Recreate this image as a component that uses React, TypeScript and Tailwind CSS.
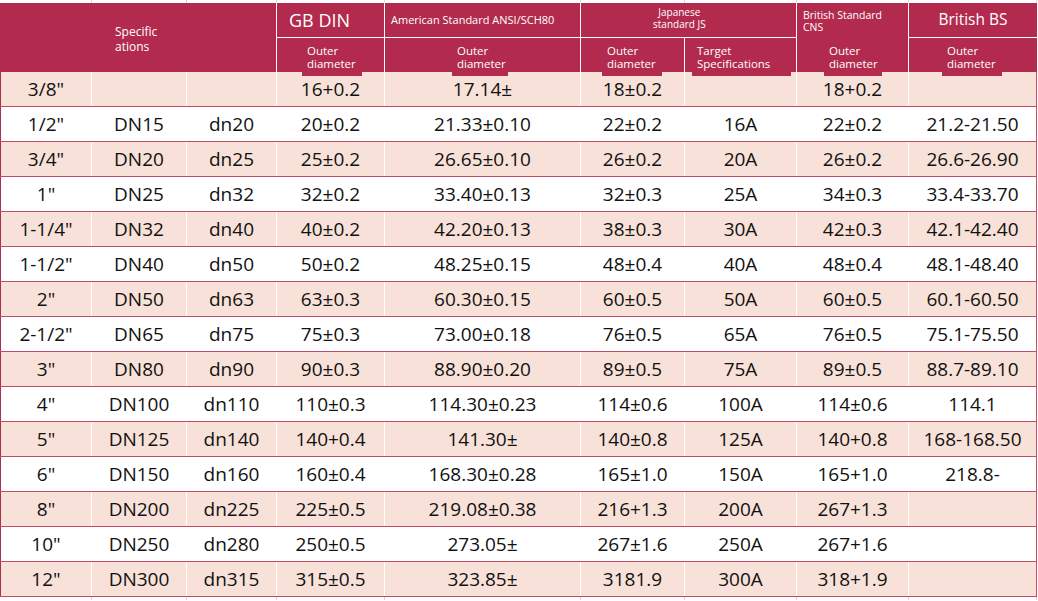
import React from 'react';

type Row = [string, string, string, string, string, string, string, string, string];

const rows: Row[] = [
  ['3/8"', '', '', '16+0.2', '17.14±', '18±0.2', '', '18+0.2', ''],
  ['1/2"', 'DN15', 'dn20', '20±0.2', '21.33±0.10', '22±0.2', '16A', '22±0.2', '21.2-21.50'],
  ['3/4"', 'DN20', 'dn25', '25±0.2', '26.65±0.10', '26±0.2', '20A', '26±0.2', '26.6-26.90'],
  ['1"', 'DN25', 'dn32', '32±0.2', '33.40±0.13', '32±0.3', '25A', '34±0.3', '33.4-33.70'],
  ['1-1/4"', 'DN32', 'dn40', '40±0.2', '42.20±0.13', '38±0.3', '30A', '42±0.3', '42.1-42.40'],
  ['1-1/2"', 'DN40', 'dn50', '50±0.2', '48.25±0.15', '48±0.4', '40A', '48±0.4', '48.1-48.40'],
  ['2"', 'DN50', 'dn63', '63±0.3', '60.30±0.15', '60±0.5', '50A', '60±0.5', '60.1-60.50'],
  ['2-1/2"', 'DN65', 'dn75', '75±0.3', '73.00±0.18', '76±0.5', '65A', '76±0.5', '75.1-75.50'],
  ['3"', 'DN80', 'dn90', '90±0.3', '88.90±0.20', '89±0.5', '75A', '89±0.5', '88.7-89.10'],
  ['4"', 'DN100', 'dn110', '110±0.3', '114.30±0.23', '114±0.6', '100A', '114±0.6', '114.1'],
  ['5"', 'DN125', 'dn140', '140+0.4', '141.30±', '140±0.8', '125A', '140+0.8', '168-168.50'],
  ['6"', 'DN150', 'dn160', '160±0.4', '168.30±0.28', '165±1.0', '150A', '165+1.0', '218.8-'],
  ['8"', 'DN200', 'dn225', '225±0.5', '219.08±0.38', '216+1.3', '200A', '267+1.3', ''],
  ['10"', 'DN250', 'dn280', '250±0.5', '273.05±', '267±1.6', '250A', '267+1.6', ''],
  ['12"', 'DN300', 'dn315', '315±0.5', '323.85±', '3181.9', '300A', '318+1.9', ''],
];

const cols = 'grid grid-cols-[92px_95px_90px_108px_196px_104px_112px_112px_128px]';

// small tab-like label under the header that hangs into the first row
function SubLabel({ className, children }: { className: string; children: React.ReactNode }) {
  return (
    <div
      className={`relative z-10 -mb-[4px] bg-[#b22b4e] pt-[3px] pb-[6px] pl-[5px] text-[11.5px] leading-[13px] ${className}`}
    >
      {children}
    </div>
  );
}

function Ticks() {
  return (
    <div className={`${cols} h-[3px] bg-white`}>
      {Array.from({ length: 9 }).map((_, i) => (
        <div key={i} className="border-r border-[#d6d6d6]" />
      ))}
    </div>
  );
}

export default function App() {
  return (
    <div
      className="w-[1038px] h-[601px] overflow-hidden bg-white text-[#111]"
      style={{ fontFamily: '"Open Sans", "Noto Sans", sans-serif' }}
    >
      <div className="w-[1037px]">
        <Ticks />

        {/* Header */}
        <div className={`${cols} grid-rows-[35px_34px] bg-[#b22b4e] text-white`}>
          <div className="col-span-3 row-span-2 border-r border-white pl-[115px] pt-[21px] text-[12px] leading-[15px]">
            Specific
            <br />
            ations
          </div>
          <div className="flex items-center border-r border-b border-white pl-[12px] text-[18px]">GB DIN</div>
          <div className="flex items-center border-r border-b border-white pl-[6px] text-[11px]">
            American Standard ANSI/SCH80
          </div>
          <div className="col-span-2 border-r border-b border-white pl-[72px] pt-[3px] text-[10px] leading-[12px]">
            <div className="inline-block text-center">
              Japanese
              <br />
              standard JS
            </div>
          </div>
          <div className="row-span-2 flex flex-col border-r border-white">
            <div className="pl-[6px] pt-[6px] text-[10.5px] leading-[12px]">
              British Standard
              <br />
              CNS
            </div>
            <div className="mt-auto">
              <SubLabel className="ml-[27px] w-[58px]">
                Outer
                <br />
                diameter
              </SubLabel>
            </div>
          </div>
          <div className="flex items-center justify-center border-b border-white text-[15.5px]">British BS</div>

          <div className="flex items-end border-r border-white">
            <SubLabel className="ml-[25px] w-[60px]">
              Outer
              <br />
              diameter
            </SubLabel>
          </div>
          <div className="flex items-end border-r border-white">
            <SubLabel className="ml-[67px] w-[56px]">
              Outer
              <br />
              diameter
            </SubLabel>
          </div>
          <div className="flex items-end border-r border-white">
            <SubLabel className="ml-[21px] w-[60px]">
              Outer
              <br />
              diameter
            </SubLabel>
          </div>
          <div className="flex items-end border-r border-white">
            <SubLabel className="ml-[7px] w-[99px]">
              Target
              <br />
              Specifications
            </SubLabel>
          </div>
          <div className="flex items-end">
            <SubLabel className="ml-[33px] w-[60px]">
              Outer
              <br />
              diameter
            </SubLabel>
          </div>
        </div>

        {/* Body */}
        {rows.map((r, i) => (
          <div
            key={i}
            className={`${cols} h-[35px] border-b border-[#c24b69] ${i % 2 === 0 ? 'bg-[#f8e1d8]' : 'bg-white'}`}
          >
            {r.map((c, j) => (
              <div
                key={j}
                className={`flex items-center justify-center text-[19px] ${
                  j === 0 ? 'border-l border-l-[#a8324f] border-r border-r-white' : ''
                } ${j > 0 && j < 8 ? 'border-r border-white' : ''} ${j === 8 ? 'border-r border-[#c24b69]' : ''}`}
              >
                {c}
              </div>
            ))}
          </div>
        ))}

        <Ticks />
      </div>
    </div>
  );
}
